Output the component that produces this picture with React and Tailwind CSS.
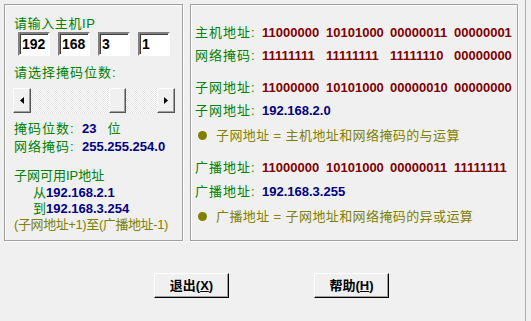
import React from 'react';

const FONT = "font-['Liberation_Sans','Noto_Sans_CJK_SC',sans-serif]";
const raised =
  'border border-t-white border-l-white border-r-[#555] border-b-[#555] shadow-[inset_-1px_-1px_0_#a0a0a0] bg-[#f0f0f0]';
const etched =
  'border border-[#a0a0a0] shadow-[inset_1px_1px_0_#ffffff,1px_1px_0_#ffffff]';

const Label = ({ children, w = 'w-[68px]' }) => (
  <span className={`${w} shrink-0 text-[13px] tracking-[1px] text-[#008000]`}>{children}</span>
);

const Row = ({ className = '', children }) => (
  <div className={`h-[16px] flex items-center leading-none whitespace-nowrap ${className}`}>{children}</div>
);

const Bin = ({ groups }) => (
  <div className="flex">
    {groups.map((g, i) => (
      <span key={i} className="w-[64px] text-[13px] font-bold text-[#800000]">{g}</span>
    ))}
  </div>
);

const IpBox = ({ value }) => (
  <div className="w-[32px] h-[24px] bg-white border-2 border-t-[#808080] border-l-[#808080] border-r-white border-b-white shadow-[inset_1px_1px_0_#404040] flex items-center pl-[2px] text-[14px] font-bold text-black">
    {value}
  </div>
);

const Arrow = ({ left }) => (
  <div className={`w-[18px] h-full flex items-center justify-center ${raised}`}>
    <svg width="4" height="7" viewBox="0 0 4 7">
      {left ? <path d="M4 0 L0 3.5 L4 7 Z" fill="#000" /> : <path d="M0 0 L4 3.5 L0 7 Z" fill="#000" />}
    </svg>
  </div>
);

const Bullet = ({ children }) => (
  <Row className="ml-[3px]">
    <span className="w-[9px] h-[9px] rounded-full bg-[#808000]" />
    <span className="ml-[9px] text-[13px] tracking-[0.4px] text-[#808000]">{children}</span>
  </Row>
);

export default function App() {
  return (
    <div className={`w-[531px] h-[321px] bg-[#f0f0f0] ${FONT}`}>
      <div className="w-[526px] h-full border-r border-[#b0b0b0] pt-[4px] pl-[4px]">
        <div className="flex gap-[7px]">
          {/* left panel */}
          <div className={`w-[179px] h-[237px] ${etched} pl-[9px] pt-[10px] flex flex-col`}>
            <Row className="text-[13px] tracking-[0.6px] text-[#008000]">请输入主机IP</Row>
            <div className="mt-[1px] ml-[4px] flex gap-[8px]">
              <IpBox value="192" />
              <IpBox value="168" />
              <IpBox value="3" />
              <IpBox value="1" />
            </div>
            <Row className="mt-[8px] text-[13px] tracking-[1px] text-[#008000]">请选择掩码位数:</Row>
            <div className="mt-[8px] -ml-[1px] w-[162px] h-[25px] flex bg-[repeating-conic-gradient(#e4e4e4_0%_25%,#ffffff_0%_50%)] bg-[length:2px_2px]">
              <Arrow left />
              <div className="flex-1 flex">
                <div className="w-[78px]" />
                <div className={`w-[17px] h-full ${raised}`} />
              </div>
              <Arrow />
            </div>
            <Row className="mt-[7px]">
              <Label>掩码位数:</Label>
              <span className="text-[13px] font-bold text-[#000080]">23</span>
              <span className="ml-[11px] text-[13px] text-[#008000]">位</span>
            </Row>
            <Row className="mt-[2px]">
              <Label>网络掩码:</Label>
              <span className="text-[13px] font-bold text-[#000080]">255.255.254.0</span>
            </Row>
            <Row className="mt-[13px] text-[13px] text-[#008000]">子网可用IP地址</Row>
            <Row className="mt-[1px] h-[15px] ml-[19px]">
              <span className="text-[13px] text-[#008000]">从</span>
              <span className="text-[13px] font-bold text-[#000080]">192.168.2.1</span>
            </Row>
            <Row className="h-[15px] ml-[19px]">
              <span className="text-[13px] text-[#008000]">到</span>
              <span className="text-[13px] font-bold text-[#000080]">192.168.3.254</span>
            </Row>
            <Row className="text-[13px] tracking-[-0.4px] text-[#808000]">(子网地址+1)至(广播地址-1)</Row>
          </div>

          {/* right panel */}
          <div className={`w-[328px] h-[237px] ${etched} pl-[4px] pt-[19px] flex flex-col`}>
            <Row>
              <Label w="w-[67px]">主机地址:</Label>
              <Bin groups={['11000000', '10101000', '00000011', '00000001']} />
            </Row>
            <Row className="mt-[7px]">
              <Label w="w-[67px]">网络掩码:</Label>
              <Bin groups={['11111111', '11111111', '11111110', '00000000']} />
            </Row>
            <Row className="mt-[16px]">
              <Label w="w-[67px]">子网地址:</Label>
              <Bin groups={['11000000', '10101000', '00000010', '00000000']} />
            </Row>
            <Row className="mt-[7px]">
              <Label w="w-[67px]">子网地址:</Label>
              <span className="text-[13px] font-bold text-[#000080]">192.168.2.0</span>
            </Row>
            <div className="mt-[9px]">
              <Bullet>子网地址 = 主机地址和网络掩码的与运算</Bullet>
            </div>
            <Row className="mt-[16px]">
              <Label w="w-[67px]">广播地址:</Label>
              <Bin groups={['11000000', '10101000', '00000011', '11111111']} />
            </Row>
            <Row className="mt-[8px]">
              <Label w="w-[67px]">广播地址:</Label>
              <span className="text-[13px] font-bold text-[#000080]">192.168.3.255</span>
            </Row>
            <div className="mt-[9px]">
              <Bullet>广播地址 = 子网地址和网络掩码的异或运算</Bullet>
            </div>
          </div>
        </div>

        {/* buttons */}
        <div className="mt-[32px] ml-[150px] flex gap-[85px]">
          <button className={`w-[75px] h-[25px] ${raised} border-r-black border-b-black text-[13px] font-bold text-black flex items-center justify-center`}>
            退出(<span className="underline">X</span>)
          </button>
          <button className={`w-[75px] h-[25px] ${raised} border-r-black border-b-black text-[13px] font-bold text-black flex items-center justify-center`}>
            帮助(<span className="underline">H</span>)
          </button>
        </div>
      </div>
    </div>
  );
}
